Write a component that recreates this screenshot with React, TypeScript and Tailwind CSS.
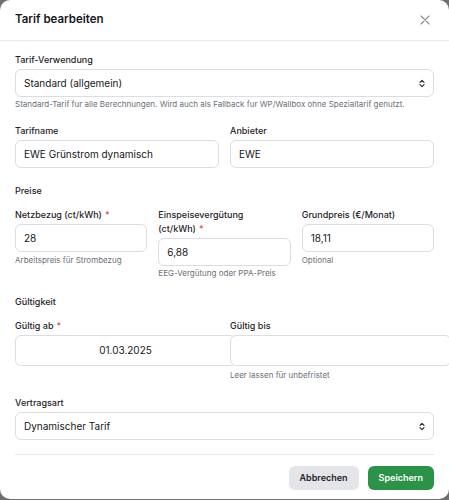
import { ReactNode } from 'react';

function Label({ children, required }: { children: ReactNode; required?: boolean }) {
  return (
    <div className="text-[9px] leading-[14px] font-medium text-[#1f2328] mb-[2px]">
      {children}
      {required && <span className="text-[#e5484d] ml-[3px]">*</span>}
    </div>
  );
}

function Hint({ children, className = '' }: { children: ReactNode; className?: string }) {
  return <div className={`text-[8px] leading-[14px] text-[#6b7078] whitespace-nowrap ${className}`}>{children}</div>;
}

function Field({ value }: { value: string }) {
  return (
    <div className="h-[28px] w-full rounded-[6px] border border-[#dcdde2] bg-white pl-[8px] flex items-center text-[10px] text-[#15171a]">
      {value}
    </div>
  );
}

function Chevrons() {
  return (
    <svg width="6" height="9" viewBox="0 0 6 9" fill="none" stroke="#2a2d33" strokeWidth="1.2" strokeLinecap="round" strokeLinejoin="round">
      <path d="M1 3.3 3 1.3l2 2" />
      <path d="M1 5.7 3 7.7l2-2" />
    </svg>
  );
}

function Select({ value }: { value: string }) {
  return (
    <div className="h-[28px] w-full rounded-[6px] border border-[#dcdde2] bg-white pl-[8px] pr-[8px] flex items-center justify-between text-[10px] text-[#15171a]">
      <span>{value}</span>
      <Chevrons />
    </div>
  );
}

function DateField({ value }: { value?: string }) {
  return (
    <div className="relative h-[31px] w-[221px] rounded-[6px] border border-[#dcdde2] bg-white flex items-center justify-center text-[10px] text-[#15171a]">
      {value}
    </div>
  );
}

export default function App() {
  return (
    <div className="w-[449px] h-[500px] overflow-hidden bg-[#6f6f6f] font-['Inter',sans-serif]">
      <div className="h-[499px] bg-white rounded-[10px]">
        <div className="h-[41px] flex items-center justify-between px-[15px] border-b border-[#e7e8eb]">
          <h2 className="text-[11.5px] font-semibold text-[#16181c]">Tarif bearbeiten</h2>
          <svg width="10" height="10" viewBox="0 0 10 10" stroke="#8a8d94" strokeWidth="1.1" strokeLinecap="round" className="mr-[4px]">
            <path d="M1 1l8 8M9 1l-8 8" />
          </svg>
        </div>

        <div className="px-[15px] pt-[12px]">
          <Label>Tarif-Verwendung</Label>
          <Select value="Standard (allgemein)" />
          <Hint>Standard-Tarif fur alle Berechnungen. Wird auch als Fallback fur WP/Wallbox ohne Spezialtarif genutzt.</Hint>

          <div className="grid grid-cols-2 gap-[11px] mt-[13px]">
            <div>
              <Label>Tarifname</Label>
              <Field value="EWE Grünstrom dynamisch" />
            </div>
            <div>
              <Label>Anbieter</Label>
              <Field value="EWE" />
            </div>
          </div>

          <div className="mt-[16px] text-[9px] leading-[14px] font-medium text-[#1f2328]">Preise</div>
          <div className="grid grid-cols-3 gap-[11px] mt-[10px]">
            <div>
              <Label required>Netzbezug (ct/kWh)</Label>
              <Field value="28" />
              <Hint className="mt-[1px]">Arbeitspreis für Strombezug</Hint>
            </div>
            <div>
              <Label required>
                Einspeisevergütung
                <br />
                (ct/kWh)
              </Label>
              <Field value="6,88" />
              <Hint>EEG-Vergütung oder PPA-Preis</Hint>
            </div>
            <div>
              <Label>Grundpreis (€/Monat)</Label>
              <Field value="18,11" />
              <Hint className="mt-[1px]">Optional</Hint>
            </div>
          </div>

          <div className="mt-[15px] text-[9px] leading-[14px] font-medium text-[#1f2328]">Gültigkeit</div>
          <div className="grid grid-cols-2 gap-[11px] mt-[10px]">
            <div>
              <Label required>Gültig ab</Label>
              <DateField value="01.03.2025" />
            </div>
            <div>
              <Label>Gültig bis</Label>
              <DateField />
              <Hint className="mt-[2px]">Leer lassen für unbefristet</Hint>
            </div>
          </div>

          <div className="mt-[14px]">
            <Label>Vertragsart</Label>
            <Select value="Dynamischer Tarif" />
          </div>

          <div className="mt-[14px] border-t border-[#e7e8eb]" />

          <div className="flex justify-end gap-[9px] pt-[11px]">
            <button className="h-[24px] px-[11px] rounded-[6px] bg-[#e4e5e9] text-[9px] font-semibold text-[#1f2328]">Abbrechen</button>
            <button className="h-[24px] px-[11px] rounded-[6px] bg-[#2b9348] text-[9px] font-semibold text-white">Speichern</button>
          </div>
        </div>
      </div>
    </div>
  );
}
